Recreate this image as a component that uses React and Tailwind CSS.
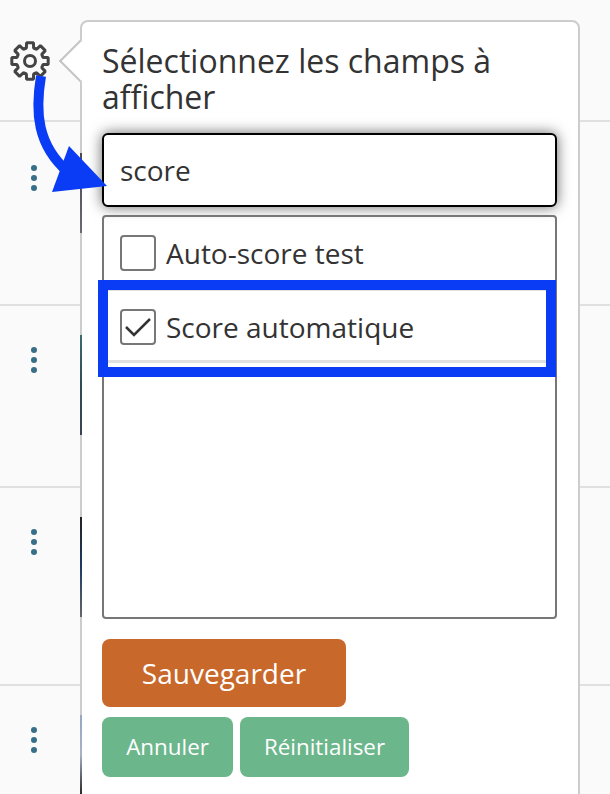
const font = { fontFamily: '"Open Sans", sans-serif' };

// 8 tooth cog outline, computed once
const gearPoints = Array.from({ length: 8 }, (_, i) => {
  const a = (i * Math.PI) / 4 - Math.PI / 2;
  const pts = [
    [13.5, -0.27],
    [18.5, -0.19],
    [18.5, 0.19],
    [13.5, 0.27],
  ];
  return pts
    .map(([r, d]) => `${(20 + r * Math.cos(a + d)).toFixed(2)},${(20 + r * Math.sin(a + d)).toFixed(2)}`)
    .join(' ');
}).join(' ');

const GearIcon = () => (
  <svg width="40" height="40" viewBox="0 0 40 40" fill="none" stroke="#444444" strokeWidth="3" strokeLinejoin="bevel">
    <polygon points={gearPoints} />
    <circle cx="20" cy="20" r="5.5" />
  </svg>
);

const rows = [
  { height: 'h-[184px]', dots: 'pt-[43px]', thumb: 'mt-[31px] h-[80px]', color: 'bg-gradient-to-b from-[#4a4a55] to-[#6a6a75]' },
  { height: 'h-[182px]', dots: 'pt-[41px]', thumb: 'mt-[29px] h-[100px]', color: 'bg-gradient-to-b from-[#3f6a70] via-[#2f4a5a] to-[#3a4252]' },
  { height: 'h-[198px]', dots: 'pt-[41px]', thumb: 'mt-[29px] h-[100px]', color: 'bg-gradient-to-b from-[#222222] via-[#1c3a63] to-[#666666]' },
  { height: 'h-[110px]', dots: 'pt-[41px]', thumb: 'mt-[29px] h-[79px]', color: 'bg-gradient-to-b from-[#98a6c2] via-[#a8b2c8] to-[#2c2c2c]' },
];

const Row = ({ row }) => (
  <div className={`flex border-t-2 border-[#e0e0e0] ${row.height}`}>
    <div className={`w-[80px] pl-[31px] ${row.dots}`}>
      <div className="flex flex-col gap-1">
        <span className="w-1.5 h-1.5 rounded-full bg-[#376f88]" />
        <span className="w-1.5 h-1.5 rounded-full bg-[#376f88]" />
        <span className="w-1.5 h-1.5 rounded-full bg-[#376f88]" />
      </div>
    </div>
    <div className={`relative z-20 w-[2px] ${row.thumb} ${row.color}`} />
  </div>
);

const Checkbox = ({ checked }) => (
  <span className="flex items-center justify-center w-9 h-9 shrink-0 border-2 border-[#777777] rounded bg-white">
    {checked && (
      <svg width="28" height="22" viewBox="0 0 28 22" fill="none" stroke="#333333" strokeWidth="2.5">
        <path d="M2 11 L10 19 L26 3" />
      </svg>
    )}
  </span>
);

const App = () => (
  <div className="relative w-[610px] h-[794px] overflow-hidden bg-[#fafafa]" style={font}>
    <div className="h-[120px] pl-[10px] pt-[41px]">
      <GearIcon />
    </div>
    {rows.map((row, i) => (
      <Row key={i} row={row} />
    ))}

    {/* Popover */}
    <div className="absolute z-10 left-[80px] top-5 w-[500px] h-[800px] bg-white border-2 border-[#cccccc] rounded-lg pt-[21px] pl-5 pr-[21px]">
      <div className="absolute -left-[17px] top-[24px] w-[30px] h-[30px] rotate-45 bg-white border-l-2 border-b-2 border-[#c4c4c4]" />
      <h3 className="relative text-[32px] leading-9 text-[#333333]">Sélectionnez les champs à afficher</h3>
      <div className="mt-[18px] h-[74px] flex items-center px-4 bg-white border-2 border-black rounded-md shadow-[0_0_14px_rgba(0,0,0,0.6)] text-[28px] text-[#333333]">
        score
      </div>
      <div className="relative mt-2 h-[404px] border-2 border-[#777777] rounded">
        <div className="flex items-center gap-2.5 h-[74px] pl-3 text-[28px] text-[#333333] border-b-2 border-[#e0e0e0] mx-1">
          <Checkbox />
          Auto-score test
        </div>
        <div className="flex items-center gap-2.5 h-[72px] pl-3 pt-[2px] text-[28px] text-[#333333] border-b-[3px] border-[#e0e0e0] mx-1">
          <Checkbox checked />
          Score automatique
        </div>
        {/* blue highlight annotation */}
        <div className="absolute -left-[6px] top-[63px] w-[458px] h-[97px] border-[10px] border-[#0a3cf5]" />
      </div>
      <button className="block mt-5 w-[244px] h-[68px] rounded-lg bg-[#c9682b] text-white text-[28px]">Sauvegarder</button>
      <div className="flex gap-[7px] mt-2.5">
        <button className="w-[131px] h-[60px] rounded-lg bg-[#6cb68c] text-white text-[22.4px]">Annuler</button>
        <button className="w-[169px] h-[60px] rounded-lg bg-[#6cb68c] text-white text-[22.4px]">Réinitialiser</button>
      </div>
    </div>

    {/* blue arrow annotation */}
    <svg className="absolute z-30 left-0 top-0 pointer-events-none" width="120" height="200" viewBox="0 0 120 200" fill="none">
      <path d="M41 76 C 35 112, 37 145, 68 172" stroke="#0a3cf5" strokeWidth="10" />
      <polygon points="69,146 107,186 52,192" fill="#0a3cf5" />
    </svg>
  </div>
);

export default App;
